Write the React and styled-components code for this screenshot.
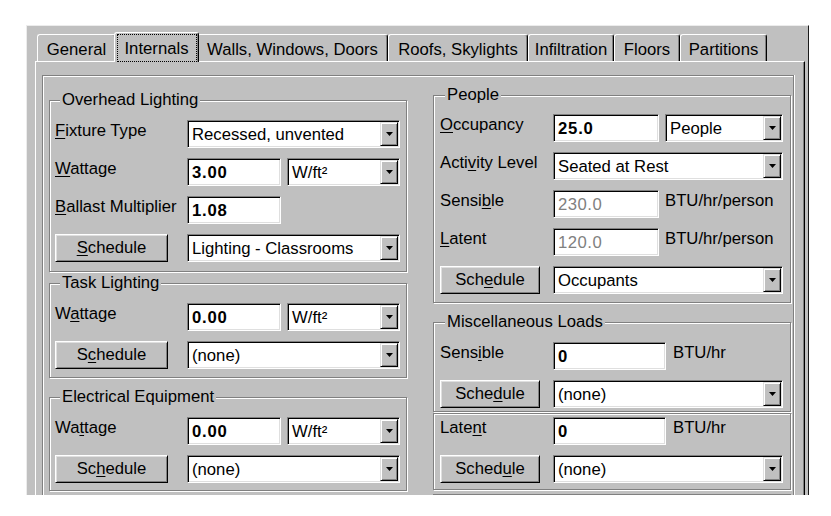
import React from 'react';
import styled, { createGlobalStyle } from 'styled-components';

const Global = createGlobalStyle`
  html, body { margin: 0; padding: 0; background: #fff; }
  body {
    font-family: "Liberation Sans", Arial, sans-serif;
    font-size: 16.7px;
    color: #000;
  }
  u { text-decoration: underline; text-underline-offset: 2px; }
`;

const Stage = styled.div`
  box-sizing: border-box;
  width: 831px;
  height: 516px;
  padding: 25px 0 0 26px;
`;

const Dialog = styled.div`
  box-sizing: border-box;
  width: 783px;
  height: 470px;
  background: #c0c0c0;
  border-top: 1px solid #ececec;
  border-left: 1px solid #ececec;
  border-right: 1px solid #1a1a1a;
  padding: 6px 3px 0 8px;
  overflow: hidden;
  display: flex;
  flex-direction: column;
`;

const TabStrip = styled.div`
  display: flex;
  align-items: flex-end;
  height: 29px;
  padding-left: 2px;
  flex-shrink: 0;
`;

const Tab = styled.div`
  box-sizing: border-box;
  position: relative;
  z-index: ${p => (p.$active ? 2 : 1)};
  width: ${p => p.$w}px;
  height: ${p => (p.$active ? 30 : 27)}px;
  margin: 0 ${p => (p.$active ? -2 : 0)}px ${p => (p.$active ? -1 : 0)}px;
  background: #c0c0c0;
  border-top: 1px solid #fff;
  border-left: 1px solid #fff;
  border-right: 1px solid #000;
  border-radius: 3px 3px 0 0;
  box-shadow: inset -1px 0 0 #808080;
  display: flex;
  align-items: center;
  justify-content: center;
  padding-top: ${p => (p.$active ? 0 : 3)}px;
  white-space: nowrap;
`;

const FocusRing = styled.span`
  box-sizing: border-box;
  width: 80px;
  height: 28px;
  border: 1px dotted #000;
  display: flex;
  align-items: center;
  justify-content: center;
  padding-top: 2px;
`;

const Page = styled.div`
  flex: 1;
  box-sizing: border-box;
  border-top: 1px solid #fff;
  border-left: 1px solid #fff;
  border-right: 1px solid #000;
  box-shadow: inset -1px 0 0 #808080;
  padding: 13px 10px 0 6px;
`;

const Panel = styled.div`
  box-sizing: border-box;
  border-top: 1px solid #808080;
  border-left: 1px solid #808080;
  border-right: 1px solid #808080;
  box-shadow: inset 1px 1px 0 #fff, 1px 0 0 #fff;
  padding: 0 2px 0 6px;
  display: flex;
  gap: 26px;
  height: 100%;
`;

const Column = styled.div`
  width: 358px;
  display: flex;
  flex-direction: column;
  flex-shrink: 0;
`;

const Group = styled.div`
  position: relative;
  box-sizing: border-box;
  border: 1px solid #808080;
  box-shadow: inset 1px 1px 0 #fff, 1px 1px 0 #fff;
  margin-top: ${p => p.$mt}px;
  padding: ${p => p.$pt}px 7px ${p => p.$pb}px ${p => p.$pl}px;
  display: flex;
  flex-direction: column;
  gap: 10px;
  flex-shrink: 0;
`;

const Legend = styled.span`
  position: absolute;
  top: -10px;
  left: ${p => p.$l}px;
  padding: 0 2px;
  line-height: 18px;
  background: #c0c0c0;
  white-space: nowrap;
`;

const Row = styled.div`
  display: flex;
  align-items: flex-start;
  height: 28px;
`;

const Cell = styled.div`
  width: ${p => p.$w}px;
  flex-shrink: 0;
  line-height: 22px;
  white-space: nowrap;
`;

const Field = styled.div`
  box-sizing: border-box;
  width: ${p => p.$w}px;
  height: 28px;
  margin-left: ${p => p.$ml || 0}px;
  padding: 1px;
  background: #fff;
  border-top: 1px solid #808080;
  border-left: 1px solid #808080;
  border-right: 1px solid #fff;
  border-bottom: 1px solid #fff;
  box-shadow: inset 1px 1px 0 #000, inset -1px -1px 0 #dfdfdf;
  display: flex;
  align-items: center;
  flex-shrink: 0;
`;

const Value = styled.span`
  padding-left: 3px;
  padding-top: 1px;
  white-space: nowrap;
  font-weight: ${p => (p.$bold ? 700 : 400)};
  color: ${p => (p.$disabled ? '#808080' : '#000')};
  letter-spacing: ${p => (p.$bold ? '0.8px' : p.$disabled ? '0.5px' : '0')};
`;

const DropBtn = styled.div`
  box-sizing: border-box;
  margin-left: auto;
  width: 18px;
  align-self: stretch;
  background: #c0c0c0;
  border-top: 1px solid #dfdfdf;
  border-left: 1px solid #dfdfdf;
  border-right: 1px solid #000;
  border-bottom: 1px solid #000;
  box-shadow: inset 1px 1px 0 #fff, inset -1px -1px 0 #808080;
  display: flex;
  align-items: center;
  justify-content: center;
`;

const Button = styled.div`
  box-sizing: border-box;
  width: ${p => p.$w}px;
  height: 28px;
  background: #c0c0c0;
  border-top: 1px solid #fff;
  border-left: 1px solid #fff;
  border-right: 1px solid #000;
  border-bottom: 1px solid #000;
  box-shadow: inset 1px 1px 0 #dfdfdf, inset -1px -1px 0 #808080;
  display: flex;
  align-items: center;
  justify-content: center;
  white-space: nowrap;
`;

const Unit = styled.span`
  margin-left: ${p => p.$ml}px;
  line-height: 22px;
  white-space: nowrap;
`;

const Arrow = () => (
  <svg width="7" height="4" viewBox="0 0 7 4">
    <polygon points="0,0 7,0 3.5,4" fill="#000" />
  </svg>
);

const Select = ({ w, ml, children }) => (
  <Field $w={w} $ml={ml}>
    <Value>{children}</Value>
    <DropBtn>
      <Arrow />
    </DropBtn>
  </Field>
);

const Input = ({ w, ml, bold, disabled, children }) => (
  <Field $w={w} $ml={ml}>
    <Value $bold={bold} $disabled={disabled}>{children}</Value>
  </Field>
);

const tabs = [
  { t: 'General', w: 79 },
  { t: 'Internals', w: 85, active: true },
  { t: 'Walls, Windows, Doors', w: 191 },
  { t: 'Roofs, Skylights', w: 140 },
  { t: 'Infiltration', w: 86 },
  { t: 'Floors', w: 66 },
  { t: 'Partitions', w: 87 },
];

const LW = 132; // left label column
const RW = 113; // right label column

export default function App() {
  return (
    <Stage>
      <Global />
      <Dialog>
        <TabStrip>
          {tabs.map(tab => (
            <Tab key={tab.t} $w={tab.w} $active={tab.active}>
              {tab.active ? <FocusRing>{tab.t}</FocusRing> : tab.t}
            </Tab>
          ))}
        </TabStrip>
        <Page>
          <Panel>
            <Column>
              <Group $mt={24} $pt={19} $pb={9} $pl={5}>
                <Legend $l={10}>Overhead Lighting</Legend>
                <Row>
                  <Cell $w={LW}><u>F</u>ixture Type</Cell>
                  <Select w={213}>Recessed, unvented</Select>
                </Row>
                <Row>
                  <Cell $w={LW}><u>W</u>attage</Cell>
                  <Input w={94} bold>3.00</Input>
                  <Select w={113} ml={6}>W/ft²</Select>
                </Row>
                <Row>
                  <Cell $w={LW}><u>B</u>allast Multiplier</Cell>
                  <Input w={94} bold>1.08</Input>
                </Row>
                <Row>
                  <Cell $w={LW}><Button $w={113}><span><u>S</u>chedule</span></Button></Cell>
                  <Select w={213}>Lighting - Classrooms</Select>
                </Row>
              </Group>

              <Group $mt={11} $pt={19} $pb={8} $pl={5}>
                <Legend $l={10}>Task Lighting</Legend>
                <Row>
                  <Cell $w={LW}>W<u>a</u>ttage</Cell>
                  <Input w={94} bold>0.00</Input>
                  <Select w={113} ml={6}>W/ft²</Select>
                </Row>
                <Row>
                  <Cell $w={LW}><Button $w={113}><span>S<u>c</u>hedule</span></Button></Cell>
                  <Select w={213}>(none)</Select>
                </Row>
              </Group>

              <Group $mt={19} $pt={19} $pb={7} $pl={5}>
                <Legend $l={10}>Electrical Equipment</Legend>
                <Row>
                  <Cell $w={LW}>Wa<u>t</u>tage</Cell>
                  <Input w={94} bold>0.00</Input>
                  <Select w={113} ml={6}>W/ft²</Select>
                </Row>
                <Row>
                  <Cell $w={LW}><Button $w={113}><span>Sc<u>h</u>edule</span></Button></Cell>
                  <Select w={213}>(none)</Select>
                </Row>
              </Group>
            </Column>

            <Column>
              <Group $mt={19} $pt={18} $pb={8} $pl={6}>
                <Legend $l={11}>People</Legend>
                <Row>
                  <Cell $w={RW}><u>O</u>ccupancy</Cell>
                  <Input w={106} bold>25.0</Input>
                  <Select w={118} ml={6}>People</Select>
                </Row>
                <Row>
                  <Cell $w={RW}>Acti<u>v</u>ity Level</Cell>
                  <Select w={230}>Seated at Rest</Select>
                </Row>
                <Row>
                  <Cell $w={RW}>Sensi<u>b</u>le</Cell>
                  <Input w={106} disabled>230.0</Input>
                  <Unit $ml={6}>BTU/hr/person</Unit>
                </Row>
                <Row>
                  <Cell $w={RW}><u>L</u>atent</Cell>
                  <Input w={106} disabled>120.0</Input>
                  <Unit $ml={6}>BTU/hr/person</Unit>
                </Row>
                <Row>
                  <Cell $w={RW}><Button $w={100}><span>Sch<u>e</u>dule</span></Button></Cell>
                  <Select w={230}>Occupants</Select>
                </Row>
              </Group>

              <Group $mt={19} $pt={19} $pb={3} $pl={6}>
                <Legend $l={11}>Miscellaneous Loads</Legend>
                <Row>
                  <Cell $w={RW}>Sens<u>i</u>ble</Cell>
                  <Input w={113} bold>0</Input>
                  <Unit $ml={7}>BTU/hr</Unit>
                </Row>
                <Row>
                  <Cell $w={RW}><Button $w={100}><span>Sche<u>d</u>ule</span></Button></Cell>
                  <Select w={230}>(none)</Select>
                </Row>
              </Group>

              <Group $mt={1} $pt={3} $pb={6} $pl={6}>
                <Row>
                  <Cell $w={RW}>Late<u>n</u>t</Cell>
                  <Input w={113} bold>0</Input>
                  <Unit $ml={7}>BTU/hr</Unit>
                </Row>
                <Row>
                  <Cell $w={RW}><Button $w={100}><span>Sched<u>u</u>le</span></Button></Cell>
                  <Select w={230}>(none)</Select>
                </Row>
              </Group>

              <Group $mt={4} $pt={20} $pb={20} $pl={6} />
            </Column>
          </Panel>
        </Page>
      </Dialog>
    </Stage>
  );
}
